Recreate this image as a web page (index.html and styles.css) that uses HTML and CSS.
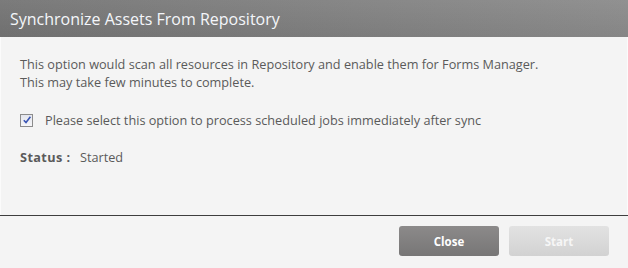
FILE: index.html
```html
<!DOCTYPE html>
<html lang="en">
<head>
<meta charset="utf-8">
<title>Synchronize Assets From Repository</title>
<link rel="stylesheet" href="styles.css">
</head>
<body>
<div class="dialog">
  <header class="dialog-header">
    <h1 class="dialog-title">Synchronize Assets From Repository</h1>
  </header>
  <main class="dialog-body">
    <p class="intro">This option would scan all resources in Repository and enable them for Forms Manager.<br>This may take few minutes to complete.</p>
    <label class="check-row">
      <span class="checkbox">
        <svg viewBox="0 0 10 10" width="10" height="10" aria-hidden="true"><path d="M1.8 5.2 L4 7.6 L8.4 1.8" fill="none" stroke="#3a55b4" stroke-width="1.6"/></svg>
      </span>
      <span class="check-text">Please select this option to process scheduled jobs immediately after sync</span>
    </label>
    <div class="status-row">
      <span class="status-label">Status :</span>
      <span class="status-value">Started</span>
    </div>
  </main>
  <footer class="dialog-footer">
    <button class="btn btn-close" type="button">Close</button>
    <button class="btn btn-start" type="button" disabled>Start</button>
  </footer>
</div>
</body>
</html>
```
FILE: styles.css
```css
*, *::before, *::after {
  box-sizing: border-box;
}
html, body {
  margin: 0;
  padding: 0;
  height: 100%;
}
body {
  background: #f4f4f4;
  font-family: "Open Sans", "Noto Sans", "Liberation Sans", sans-serif;
  color: #5a5a5a;
}
.dialog {
  display: flex;
  flex-direction: column;
  height: 268px;
}
.dialog-header {
  height: 37px;
  flex: none;
  display: flex;
  align-items: center;
  padding-left: 10px;
  background:
    linear-gradient(to bottom, rgba(255,255,255,0.05), rgba(0,0,0,0.04)),
    linear-gradient(to right, #747474, #8b8b8b);
}
.dialog-title {
  margin: 0;
  font-size: 16px;
  font-weight: normal;
  color: #f4f6fa;
}
.dialog-body {
  flex: 1;
  padding: 18px 19px 0 19px;
  border-left: 1px solid #fbfbfb;
  border-right: 1px solid #fbfbfb;
}
.intro {
  margin: 0;
  font-size: 12.7px;
  line-height: 18px;
}
.check-row {
  display: flex;
  align-items: center;
  margin-top: 20px;
  height: 18px;
}
.checkbox {
  width: 13px;
  height: 13px;
  border: 1px solid #8c8c8c;
  background: linear-gradient(#e4e6ee, #f6f6f8);
  display: flex;
  align-items: center;
  justify-content: center;
  margin-right: 12px;
}
.check-text {
  font-size: 12.7px;
}
.status-row {
  margin-top: 19px;
  height: 18px;
  display: flex;
  align-items: center;
  font-size: 12.7px;
}
.status-label {
  font-weight: bold;
  letter-spacing: 0.4px;
  width: 60px;
}
.dialog-footer {
  height: 53px;
  flex: none;
  border-top: 1px solid #3e3e3e;
  display: flex;
  justify-content: flex-end;
  align-items: flex-start;
  gap: 10px;
  padding: 10px 19px 0 0;
}
.btn {
  width: 100px;
  height: 30px;
  border: none;
  border-radius: 3px;
  font-family: inherit;
  font-size: 11.5px;
  font-weight: bold;
  color: #ffffff;
  padding: 0;
}
.btn-close {
  background: linear-gradient(#8c8a8a, #777676);
}
.btn-start {
  background: linear-gradient(#e2e2e2, #d2d2d2);
  color: #f6f6f6;
}
```
